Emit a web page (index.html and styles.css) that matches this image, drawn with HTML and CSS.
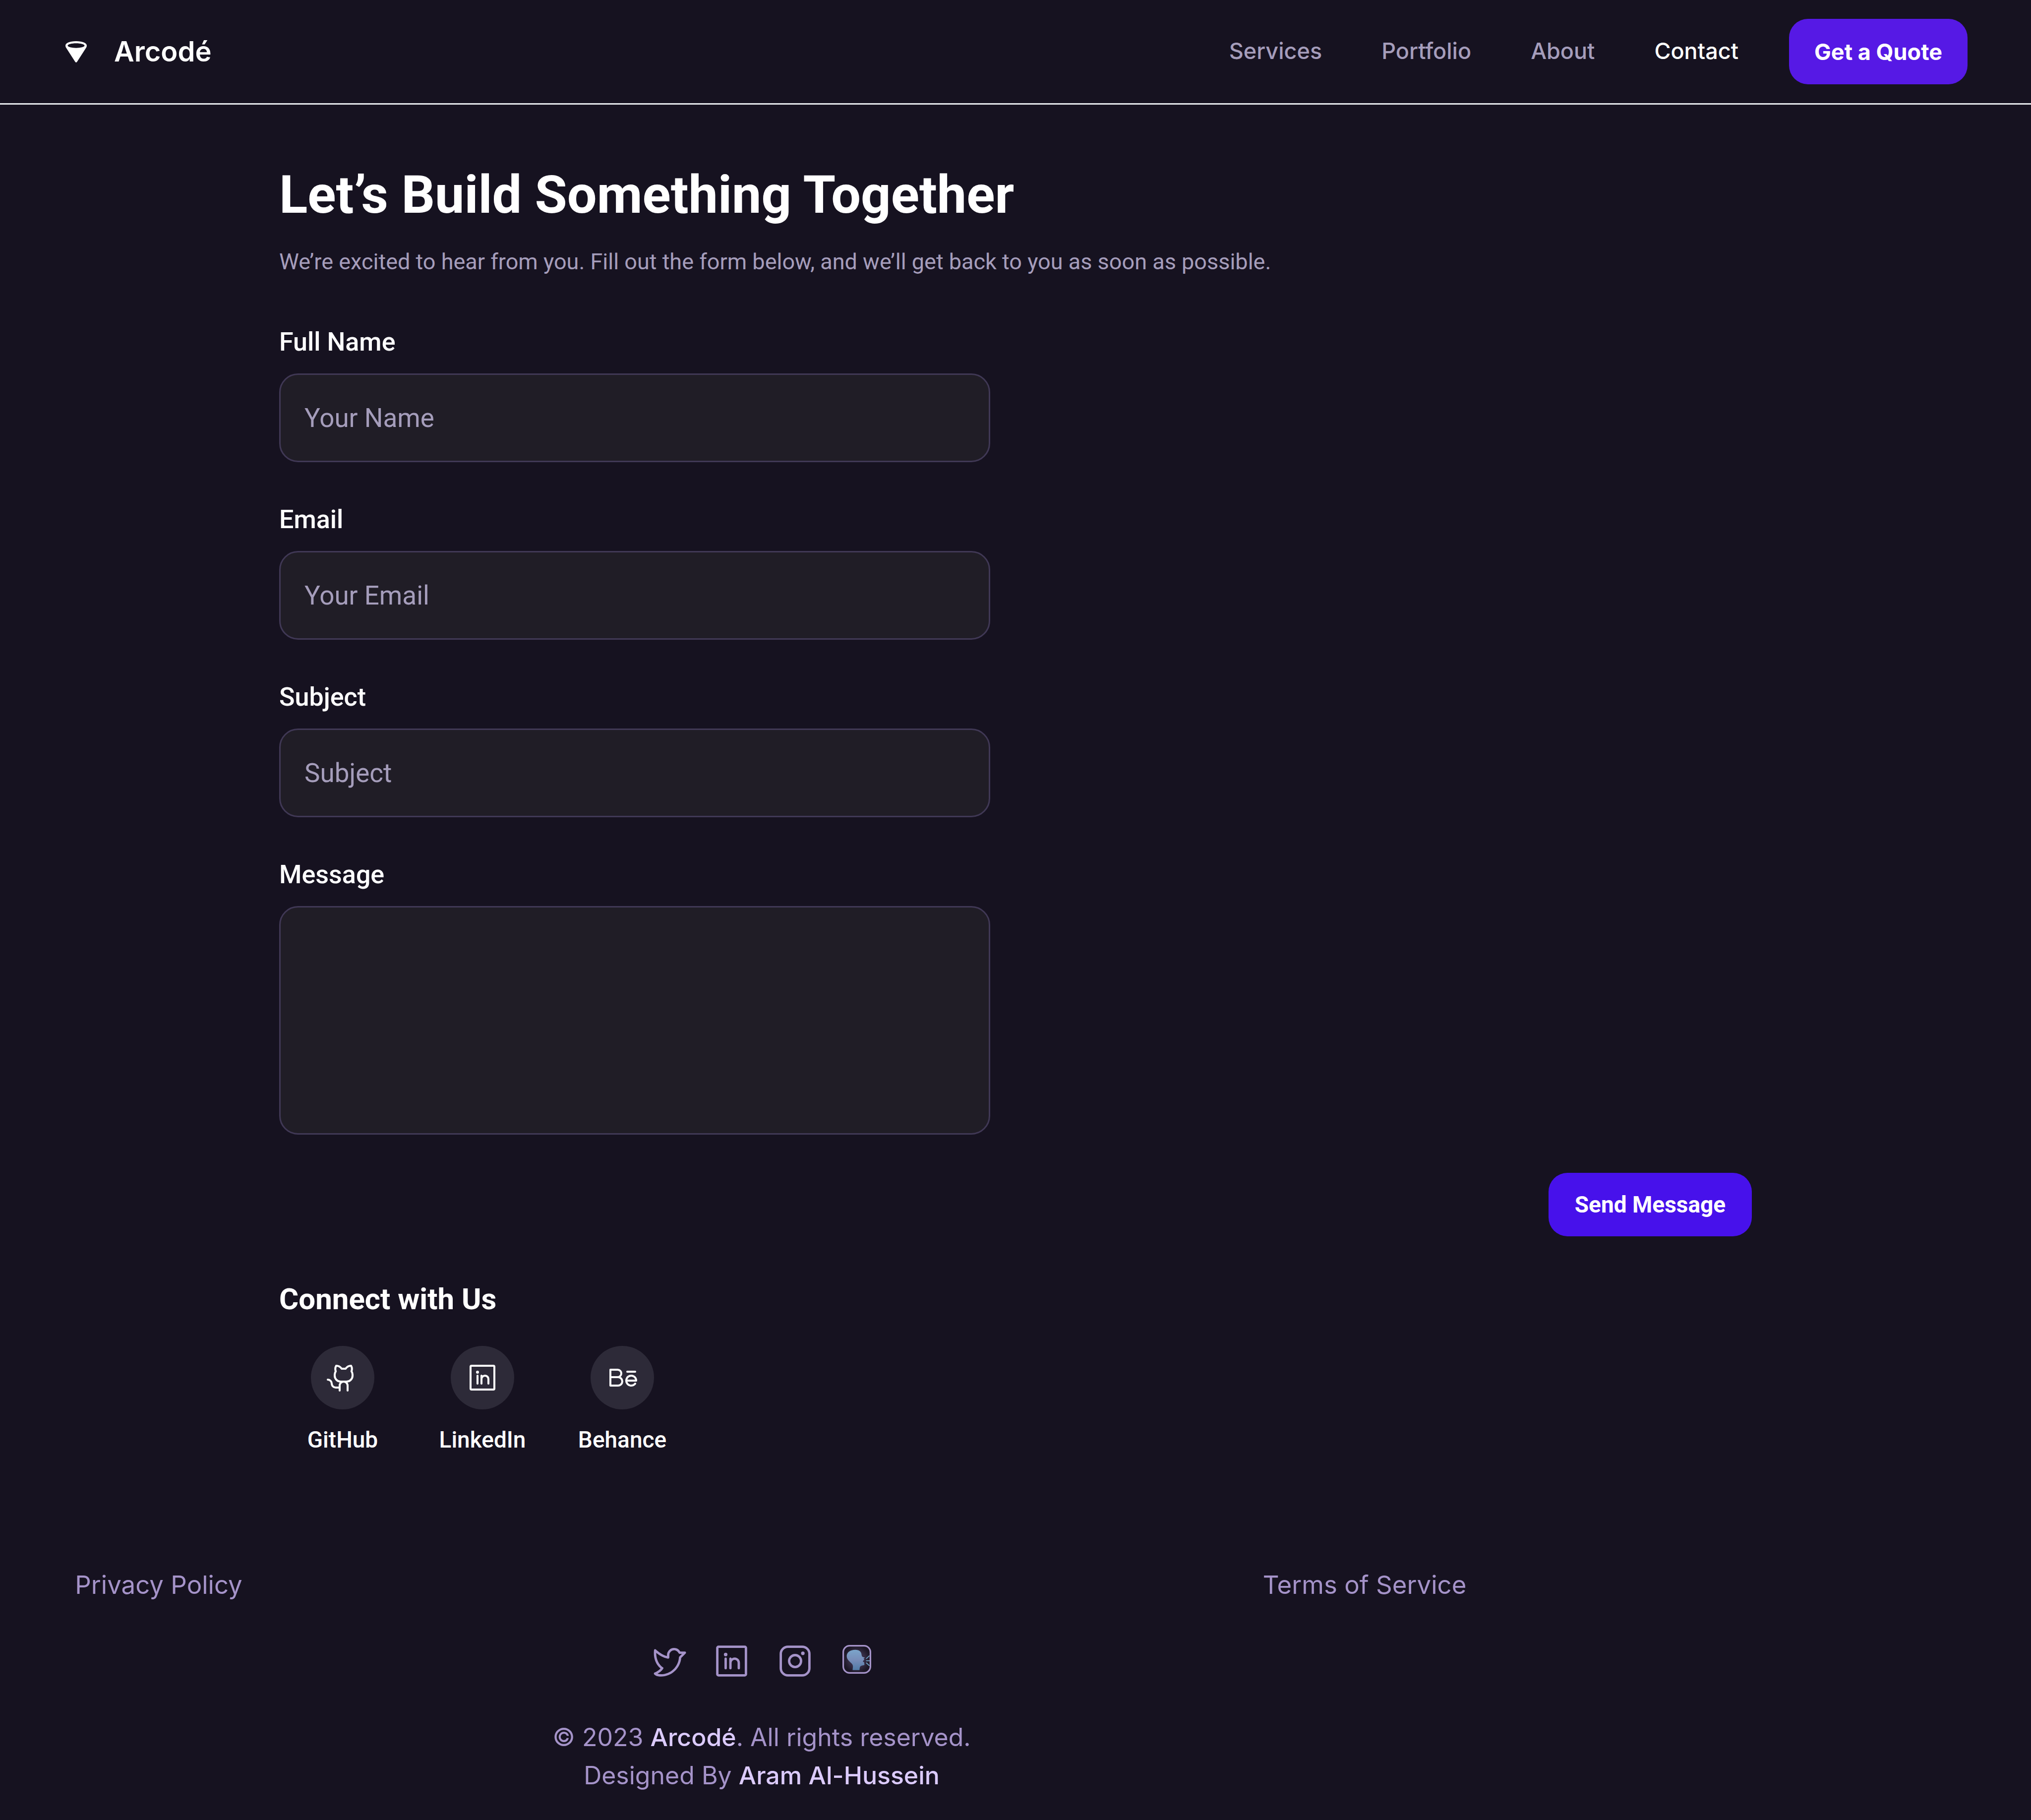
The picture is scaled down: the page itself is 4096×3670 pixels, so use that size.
FILE: index.html
```html
<!DOCTYPE html>
<html lang="en">
<head>
<meta charset="utf-8">
<meta name="viewport" content="width=device-width, initial-scale=1">
<title>Arcodé – Contact</title>
<link rel="stylesheet" href="styles.css">
</head>
<body>
<header class="site-header">
  <a class="brand" href="#">
    <svg class="brand-mark" viewBox="0 0 51 51" aria-hidden="true">
      <path fill="currentColor" fill-rule="evenodd" d="M4 13C4 7.500 13 4 25.500 4S47 7.500 47 13C47 14.500 46.600 15.600 46 16.700L27.500 45.600Q25.500 48.400 23.500 45.600L5 16.700C4.400 15.600 4 14.500 4 13ZM8.500 13C8.500 15.500 16 17.700 25.500 17.700S42.500 15.500 42.500 13S35 8.300 25.500 8.300S8.500 10.500 8.500 13Z"/>
    </svg>
    <span>Arcodé</span>
  </a>
  <div class="header-end">
    <nav class="site-nav" aria-label="Main">
      <a href="#">Services</a>
      <a href="#">Portfolio</a>
      <a href="#">About</a>
      <a class="current" href="#" aria-current="page">Contact</a>
    </nav>
    <button class="button button-quote" type="button">Get a Quote</button>
  </div>
</header>

<main class="content">
  <h1 class="title">Let’s Build Something Together</h1>
  <p class="intro">We’re excited to hear from you. Fill out the form below, and we’ll get back to you as soon as possible.</p>

  <form class="contact-form">
    <div class="field">
      <label for="name">Full Name</label>
      <input id="name" type="text" placeholder="Your Name">
    </div>
    <div class="field">
      <label for="email">Email</label>
      <input id="email" type="email" placeholder="Your Email">
    </div>
    <div class="field">
      <label for="subject">Subject</label>
      <input id="subject" type="text" placeholder="Subject">
    </div>
    <div class="field">
      <label for="message">Message</label>
      <textarea id="message"></textarea>
    </div>
    <button class="button button-send" type="submit">Send Message</button>
  </form>

  <section class="connect">
    <h2>Connect with Us</h2>
    <div class="profiles">
      <a class="profile" href="#">
        <span class="profile-icon">
          <svg viewBox="0 0 256 256" aria-hidden="true"><path fill="currentColor" d="M208.31,75.68A59.78,59.78,0,0,0,202.93,28,8,8,0,0,0,196,24a59.75,59.75,0,0,0-48,24H124A59.75,59.75,0,0,0,76,24a8,8,0,0,0-6.930,4,59.78,59.78,0,0,0-5.380,47.68A58.14,58.14,0,0,0,56,104v8a56.06,56.06,0,0,0,48.44,55.47A39.8,39.8,0,0,0,96,192v8H72a24,24,0,0,1-24-24A40,40,0,0,0,8,136a8,8,0,0,0,0,16,24,24,0,0,1,24,24,40,40,0,0,0,40,40H96v16a8,8,0,0,0,16,0V192a24,24,0,0,1,48,0v40a8,8,0,0,0,16,0V192a39.8,39.8,0,0,0-8.440-24.53A56.06,56.06,0,0,0,216,112v-8A58.14,58.14,0,0,0,208.31,75.68ZM200,112a40,40,0,0,1-40,40H112a40,40,0,0,1-40-40v-8a41.74,41.74,0,0,1,6.9-22.48A8,8,0,0,0,80,73.83a43.81,43.81,0,0,1,.79-33.58,43.88,43.88,0,0,1,32.32,20.06A8,8,0,0,0,119.82,64h32.35a8,8,0,0,0,6.74-3.69,43.87,43.87,0,0,1,32.32-20.06A43.81,43.81,0,0,1,192,73.83a8.09,8.09,0,0,0,1,7.65A41.72,41.72,0,0,1,200,104Z"/></svg>
        </span>
        <span>GitHub</span>
      </a>
      <a class="profile" href="#">
        <span class="profile-icon">
          <svg viewBox="0 0 256 256" aria-hidden="true"><path fill="currentColor" d="M216,24H40A16,16,0,0,0,24,40V216a16,16,0,0,0,16,16H216a16,16,0,0,0,16-16V40A16,16,0,0,0,216,24Zm0,192H40V40H216V216ZM96,112v64a8,8,0,0,1-16,0V112a8,8,0,0,1,16,0Zm88,28v36a8,8,0,0,1-16,0V140a20,20,0,0,0-40,0v36a8,8,0,0,1-16,0V112a8,8,0,0,1,15.79-1.78A36,36,0,0,1,184,140ZM100,84A12,12,0,1,1,88,72,12,12,0,0,1,100,84Z"/></svg>
        </span>
        <span>LinkedIn</span>
      </a>
      <a class="profile" href="#">
        <span class="profile-icon">
          <svg viewBox="0 0 256 256" aria-hidden="true"><path fill="none" stroke="currentColor" stroke-width="16" stroke-linecap="round" stroke-linejoin="round" d="M32 64H90a30 30 0 0 1 0 60H32M90 124h4a34 34 0 0 1 0 68H32V64M168 80H232M160 152H240A40 40 0 1 0 232 176"/></svg>
        </span>
        <span>Behance</span>
      </a>
    </div>
  </section>
</main>

<footer class="site-footer">
  <nav class="legal" aria-label="Legal">
    <a href="#">Privacy Policy</a>
    <a href="#">Terms of Service</a>
  </nav>
  <div class="socials">
    <a href="#" aria-label="Twitter">
      <svg viewBox="0 0 256 256" aria-hidden="true"><path fill="currentColor" d="M247.39,68.94A8,8,0,0,0,240,64H209.57A48.66,48.66,0,0,0,168.1,40a46.91,46.91,0,0,0-33.75,13.7A47.9,47.9,0,0,0,120,88v6.09C79.74,83.47,46.81,50.72,46.46,50.37a8,8,0,0,0-13.65,4.92c-4.31,47.79,9.57,79.77,22,98.18a110.93,110.93,0,0,0,21.88,24.2c-15.23,17.53-39.21,26.74-39.47,26.84a8,8,0,0,0-3.85,11.93c.75,1.12,3.75,5.05,11.08,8.72C53.51,229.7,65.48,232,80,232c70.67,0,129.72-54.42,135.75-124.44l29.91-29.9A8,8,0,0,0,247.39,68.94Zm-45,29.41a8,8,0,0,0-2.32,5.14C196,166.58,143.28,216,80,216c-10.56,0-18-1.4-23.22-3.08,11.51-6.25,27.56-17,37.88-32.48A8,8,0,0,0,92,169.08c-.47-.27-43.91-26.34-44-96,16,13,45.25,33.17,78.67,38.79A8,8,0,0,0,136,104V88a32,32,0,0,1,9.6-22.92A30.94,30.94,0,0,1,167.9,56c12.66.16,24.49,7.88,29.44,19.21A8,8,0,0,0,204.67,80h16Z"/></svg>
    </a>
    <a href="#" aria-label="LinkedIn">
      <svg viewBox="0 0 256 256" aria-hidden="true"><path fill="currentColor" d="M216,24H40A16,16,0,0,0,24,40V216a16,16,0,0,0,16,16H216a16,16,0,0,0,16-16V40A16,16,0,0,0,216,24Zm0,192H40V40H216V216ZM96,112v64a8,8,0,0,1-16,0V112a8,8,0,0,1,16,0Zm88,28v36a8,8,0,0,1-16,0V140a20,20,0,0,0-40,0v36a8,8,0,0,1-16,0V112a8,8,0,0,1,15.79-1.78A36,36,0,0,1,184,140ZM100,84A12,12,0,1,1,88,72,12,12,0,0,1,100,84Z"/></svg>
    </a>
    <a href="#" aria-label="Instagram">
      <svg viewBox="0 0 256 256" aria-hidden="true"><path fill="currentColor" d="M128,80a48,48,0,1,0,48,48A48.05,48.05,0,0,0,128,80Zm0,80a32,32,0,1,1,32-32A32,32,0,0,1,128,160ZM176,24H80A56.06,56.06,0,0,0,24,80v96a56.06,56.06,0,0,0,56,56h96a56.06,56.06,0,0,0,56-56V80A56.06,56.06,0,0,0,176,24Zm40,152a40,40,0,0,1-40,40H80a40,40,0,0,1-40-40V80A40,40,0,0,1,80,40h96a40,40,0,0,1,40,40ZM192,76a12,12,0,1,1-12-12A12,12,0,0,1,192,76Z"/></svg>
    </a>
    <a class="speaker" href="#" aria-label="Blog">
      <svg viewBox="0 0 72 72" aria-hidden="true">
        <defs>
          <linearGradient id="head" x1="0" y1="0" x2="0" y2="1">
            <stop offset="0" stop-color="#7ba5cb"/>
            <stop offset="0.500" stop-color="#788db9"/>
            <stop offset="1" stop-color="#507aa6"/>
          </linearGradient>
          <radialGradient id="glow">
            <stop offset="0" stop-color="#44395a"/>
            <stop offset="0.600" stop-color="#342b43"/>
            <stop offset="1" stop-color="#1b1625"/>
          </radialGradient>
        </defs>
        <rect x="2" y="2" width="68" height="68" rx="16" fill="url(#glow)"/>
        <path fill="url(#head)" d="M32 12C42 12 47.500 17 48 25C48.500 28 49.500 29.500 51 30L56 31.500C56 33 53 33.500 53 34.500L55 37C53 39 50.500 40 51.500 42L54.500 43.500C54 46 55.500 48 55 50C52 51.500 46 51 44 55C43 58 43 60 42.700 63H25.500C25.500 58 27.500 53 25 49C22 43.500 10.700 39 10.700 28C10.700 18 20 12 32 12Z"/>
        <path stroke="#6fa0c4" stroke-width="2.200" stroke-linecap="round" d="M60 34L67 27.500M60 39.500H68M60 45L67 51.500"/>
        <rect x="2" y="2" width="68" height="68" rx="16" fill="none" stroke="currentColor" stroke-width="4"/>
      </svg>
    </a>
  </div>
  <p class="credits">© 2023 <strong>Arcodé</strong>. All rights reserved.<br>Designed By <strong>Aram Al-Hussein</strong></p>
</footer>
</body>
</html>
```
FILE: styles.css
```css
:root {
  --bg: #161220;
  --surface: #201d26;
  --border: #403855;
  --muted: #a59dbb;
  --lilac: #a593c9;
  --lilac-bright: #dccbff;
  --display: Inter, "Liberation Sans", sans-serif;
  --text: Roboto, "Liberation Sans", sans-serif;
}

* {
  box-sizing: border-box;
}

body {
  margin: 0;
  background: var(--bg);
  color: #fff;
  font-family: var(--text);
}

a {
  color: inherit;
  text-decoration: none;
}

svg {
  display: block;
}

.site-header {
  display: flex;
  align-items: center;
  justify-content: space-between;
  padding: 38px 128px;
  border-bottom: 3px solid #e5e8eb;
  font-family: var(--display);
}

.brand {
  display: flex;
  align-items: center;
  gap: 51px;
  font-size: 56px;
  font-weight: 600;
  line-height: 72px;
}

.brand-mark {
  width: 51px;
  height: 51px;
}

.header-end {
  display: flex;
  align-items: center;
  gap: 102px;
}

.site-nav {
  display: flex;
  gap: 120px;
  padding-bottom: 4px;
  color: var(--muted);
  font-size: 45px;
  font-weight: 500;
  line-height: 67px;
}

.site-nav .current {
  color: #fff;
}

.button {
  border: 0;
  border-radius: 38px;
  padding: 0 51px;
  color: #fff;
  font-weight: 700;
}

.button-quote {
  height: 132px;
  background: #5619e5;
  font-family: var(--display);
  font-size: 45px;
}

.content {
  max-width: 3072px;
  margin: 0 auto;
  padding: 118px 51px 0;
}

.title {
  margin: 0 0 37px;
  font-size: 106px;
  font-weight: 700;
  line-height: 128px;
}

.intro {
  margin: 0 0 90px;
  color: var(--muted);
  font-size: 45px;
  line-height: 67px;
}

.contact-form {
  display: flex;
  flex-direction: column;
  gap: 77px;
}

.field {
  display: flex;
  flex-direction: column;
  gap: 25px;
  width: 100%;
  max-width: 1434px;
}

.field label {
  font-size: 52px;
  font-weight: 500;
  line-height: 77px;
}

.field input,
.field textarea {
  display: block;
  width: 100%;
  margin: 0;
  padding: 0 48px;
  border: 3px solid var(--border);
  border-radius: 38px;
  background: var(--surface);
  color: #fff;
  font-family: var(--text);
  font-size: 53px;
}

.field input {
  height: 179px;
}

.field textarea {
  height: 461px;
  padding: 48px;
  resize: none;
}

.field input::placeholder {
  color: var(--muted);
  opacity: 1;
}

.button-send {
  align-self: flex-end;
  min-width: 410px;
  height: 128px;
  background: #4711eb;
  font-family: var(--text);
  font-size: 46px;
}

.connect {
  padding-top: 88px;
}

.connect h2 {
  margin: 0 0 56px;
  font-size: 60px;
  font-weight: 700;
  line-height: 77px;
}

.profiles {
  display: flex;
  gap: 26px;
}

.profile {
  display: flex;
  flex-direction: column;
  align-items: center;
  gap: 25px;
  width: 256px;
  font-size: 46px;
  font-weight: 500;
  line-height: 72px;
}

.profile-icon {
  display: grid;
  place-items: center;
  width: 128px;
  height: 128px;
  border-radius: 50%;
  background: #2d2a38;
}

.profile-icon svg {
  width: 64px;
  height: 64px;
}

.site-footer {
  display: flex;
  flex-direction: column;
  gap: 77px;
  max-width: 3072px;
  padding: 218px 64px 50px;
  color: var(--lilac);
  font-family: var(--display);
  font-size: 51px;
  font-weight: 400;
  line-height: 77px;
}

.legal {
  display: flex;
  justify-content: space-between;
  text-align: center;
}

.legal a {
  width: 512px;
}

.socials {
  display: flex;
  justify-content: center;
  gap: 51px;
}

.socials svg {
  width: 77px;
  height: 77px;
}

.socials .speaker {
  padding: 6px;
}

.speaker svg {
  width: 58px;
  height: 58px;
}

.credits {
  margin: 0;
  font-size: 50px;
  text-align: center;
}

.credits strong {
  color: var(--lilac-bright);
  font-weight: 500;
}
```
